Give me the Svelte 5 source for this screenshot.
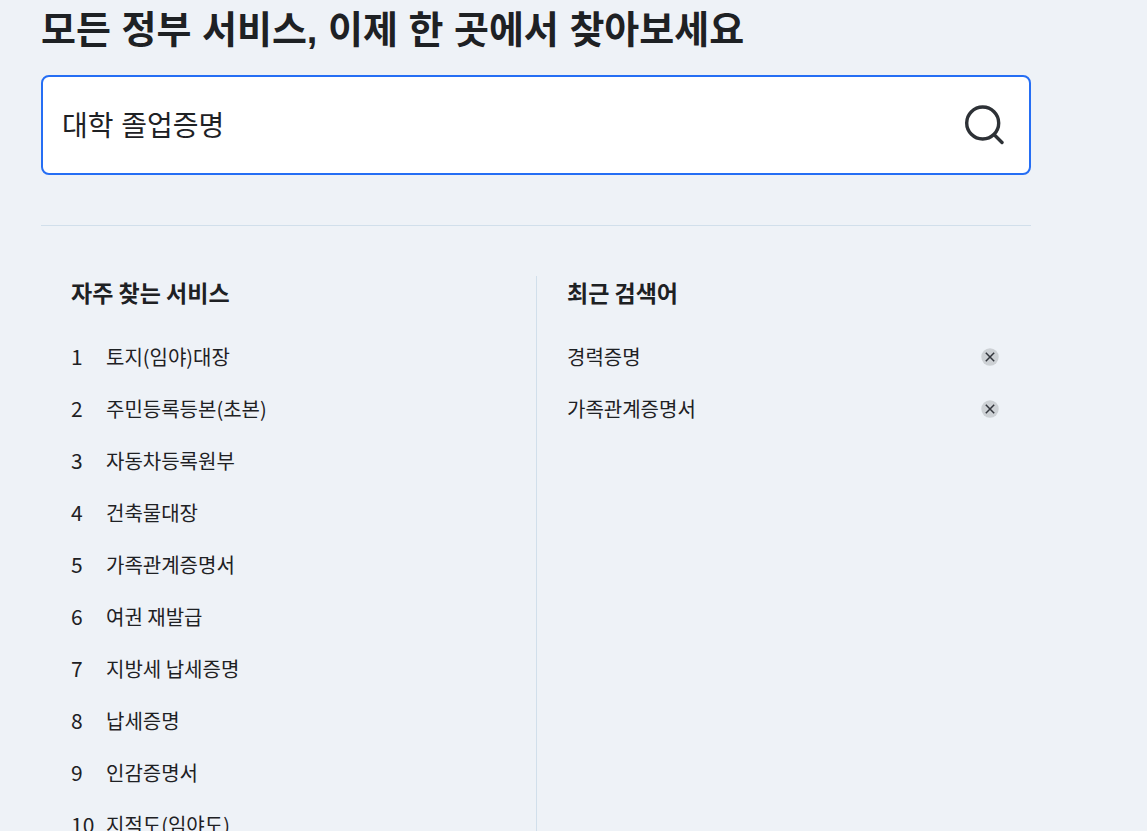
<script>
  let query = $state('대학 졸업증명');
  const services = [
    '토지(임야)대장',
    '주민등록등본(초본)',
    '자동차등록원부',
    '건축물대장',
    '가족관계증명서',
    '여권 재발급',
    '지방세 납세증명',
    '납세증명',
    '인감증명서',
    '지적도(임야도)'
  ];
  let recent = $state(['경력증명', '가족관계증명서']);
  function remove(word) {
    recent = recent.filter((w) => w !== word);
  }
</script>

<main>
  <h1>모든 정부 서비스, 이제 한 곳에서 찾아보세요</h1>
  <form class="search" onsubmit={(e) => e.preventDefault()}>
    <input type="text" aria-label="검색어" bind:value={query} />
    <button type="submit" aria-label="검색">
      <svg width="40" height="40" viewBox="0 0 40 40" fill="none" stroke="#2d3136" stroke-width="3.4" stroke-linecap="round">
        <circle cx="18.7" cy="18" r="16" />
        <path d="M30.5 30L38 37.5" />
      </svg>
    </button>
  </form>
  <div class="columns">
    <section>
      <h2>자주 찾는 서비스</h2>
      <ol>
        {#each services as name, i}
          <li><span class="num">{i + 1}</span><a href="#service">{name}</a></li>
        {/each}
      </ol>
    </section>
    <section>
      <h2>최근 검색어</h2>
      <ul>
        {#each recent as word}
          <li>
            <a href="#recent">{word}</a>
            <button type="button" aria-label="{word} 삭제" onclick={() => remove(word)}>
              <svg width="18" height="18" viewBox="0 0 18 18" fill="none">
                <circle cx="9" cy="9" r="8.7" fill="#cdd1d5" />
                <path d="M4.8 4.8L13.2 13.2M13.2 4.8L4.8 13.2" stroke="#33363d" stroke-width="1.5" />
              </svg>
            </button>
          </li>
        {/each}
      </ul>
    </section>
  </div>
</main>

<style>
  :global(body) {
    background: #eef2f7;
    overflow: hidden;
  }
  main {
    box-sizing: border-box;
    height: 100vh;
    overflow: hidden;
    padding: 0 116px 0 41px;
    color: #1e2124;
    font-family: 'Noto Sans CJK KR', sans-serif;
  }
  h1 {
    margin: 0;
    font-family: 'Liberation Sans', 'Noto Sans CJK KR', sans-serif;
    font-size: 38px;
    line-height: 60px;
    font-weight: 700;
    white-space: nowrap;
  }
  .search {
    display: flex;
    align-items: center;
    box-sizing: border-box;
    height: 100px;
    margin-top: 15px;
    padding: 0 25px 0 19px;
    background: #fff;
    border: 2px solid #256ef4;
    border-radius: 8px;
  }
  input {
    flex: 1;
    min-width: 0;
    padding: 4px 0 0;
    border: 0;
    outline: 0;
    background: none;
    color: inherit;
    font-family: 'Liberation Sans', 'Noto Sans CJK KR', sans-serif;
    font-size: 28px;
    line-height: 42px;
  }
  button {
    display: flex;
    padding: 0;
    border: 0;
    background: none;
    cursor: pointer;
  }
  .columns {
    display: grid;
    grid-template-columns: 1fr 1fr;
    margin-top: 50px;
    padding-top: 50px;
    border-top: 1px solid #d1dfeb;
  }
  section {
    padding: 0 32px 0 30px;
  }
  section + section {
    border-left: 1px solid #d1dfeb;
  }
  h2 {
    margin: 0 0 34px;
    font-size: 23px;
    line-height: 32px;
    font-weight: 700;
  }
  ol,
  ul {
    display: grid;
    gap: 22px;
    margin: 0;
    padding: 0;
    list-style: none;
  }
  li {
    display: flex;
    align-items: center;
    font-size: 20px;
    line-height: 30px;
  }
  ol li {
    align-items: baseline;
  }
  ul li {
    justify-content: space-between;
  }
  .num {
    width: 35px;
    font-size: 21px;
    line-height: 28px;
  }
  a {
    color: inherit;
    text-decoration: none;
  }
</style>
